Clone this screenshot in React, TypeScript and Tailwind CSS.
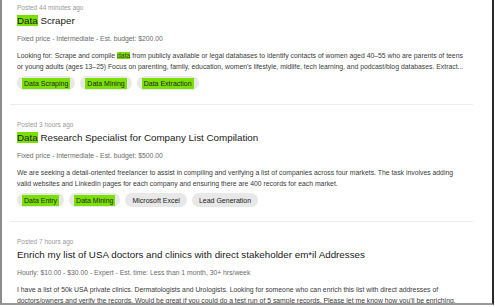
import React from "react";

type Part = string | { hl: string };

interface Job {
  posted: string;
  title: Part[];
  meta: string;
  desc: Part[][];
  tags: { label: string; hl?: boolean }[];
}

const jobs: Job[] = [
  {
    posted: "Posted 44 minutes ago",
    title: [{ hl: "Data" }, " Scraper"],
    meta: "Fixed price - Intermediate - Est. budget: $200.00",
    desc: [
      [
        "Looking for: Scrape and compile ",
        { hl: "data" },
        " from publicly available or legal databases to identify contacts of women aged 40–55 who are parents of teens",
      ],
      [
        "or young adults (ages 13–25) Focus on parenting, family, education, women's lifestyle, midlife, tech learning, and podcast/blog databases. Extract...",
      ],
    ],
    tags: [
      { label: "Data Scraping", hl: true },
      { label: "Data Mining", hl: true },
      { label: "Data Extraction", hl: true },
    ],
  },
  {
    posted: "Posted 3 hours ago",
    title: [{ hl: "Data" }, " Research Specialist for Company List Compilation"],
    meta: "Fixed price - Intermediate - Est. budget: $500.00",
    desc: [
      [
        "We are seeking a detail-oriented freelancer to assist in compiling and verifying a list of companies across four markets. The task involves adding",
      ],
      ["valid websites and LinkedIn pages for each company and ensuring there are 400 records for each market."],
    ],
    tags: [
      { label: "Data Entry", hl: true },
      { label: "Data Mining", hl: true },
      { label: "Microsoft Excel" },
      { label: "Lead Generation" },
    ],
  },
  {
    posted: "Posted 7 hours ago",
    title: ["Enrich my list of USA doctors and clinics with direct stakeholder em*il Addresses"],
    meta: "Hourly: $10.00 - $30.00 - Expert - Est. time: Less than 1 month, 30+ hrs/week",
    desc: [
      [
        "I have a list of 50k USA private clinics. Dermatologists and Urologists. Looking for someone who can enrich this list with direct addresses of",
      ],
      [
        "doctors/owners and verify the records. Would be great if you could do a test run of 5 sample records. Please let me know how you'll be enriching.",
      ],
    ],
    tags: [],
  },
];

function Rich({ parts }: { parts: Part[] }) {
  return (
    <>
      {parts.map((p, i) =>
        typeof p === "string" ? (
          <span key={i}>{p}</span>
        ) : (
          <span key={i} className="bg-[#7ae000]">
            {p.hl}
          </span>
        )
      )}
    </>
  );
}

function JobRow({ job, first }: { job: Job; first: boolean }) {
  return (
    <div className={`px-[7px] ${first ? "pt-[3px]" : "pt-[15px] border-t border-[#ececec]"} pb-[14px]`}>
      <p className="text-[6.5px] leading-[10px] text-[#9a9a9a]">{job.posted}</p>
      <h2 className="mt-[1px] text-[9.8px] leading-[14px] text-[#1a1a1a]">
        <Rich parts={job.title} />
      </h2>
      <p className="mt-[6px] text-[6.8px] leading-[10px] text-[#6b6b6b]">{job.meta}</p>
      <div className="mt-[6px] text-[6.85px] leading-[11px] text-[#3a3a3a]">
        {job.desc.map((line, i) => (
          <p key={i} className="whitespace-nowrap overflow-hidden text-ellipsis">
            <Rich parts={line} />
          </p>
        ))}
      </div>
      {job.tags.length > 0 && (
        <div className="mt-[4px] flex gap-[5px]">
          {job.tags.map((t) => (
            <span
              key={t.label}
              className="h-[14px] flex items-center rounded-full bg-[#e8e8e8] px-[5px] text-[7px] text-[#222]"
            >
              <span className={`px-[2px] leading-[11px] ${t.hl ? "bg-[#7ae000]" : ""}`}>{t.label}</span>
            </span>
          ))}
        </div>
      )}
    </div>
  );
}

export default function App() {
  return (
    <div
      className="w-[494px] h-[305px] overflow-hidden bg-white border-l-2 border-l-[#8c8c8c] border-r-2 border-r-[#2a2a2a] border-b-2 border-b-[#9a9a9a]"
      style={{ fontFamily: '"Liberation Sans", Arial, sans-serif' }}
    >
      <div className="ml-[8px] mr-[19px]">
        {jobs.map((job, i) => (
          <JobRow key={i} job={job} first={i === 0} />
        ))}
      </div>
    </div>
  );
}
